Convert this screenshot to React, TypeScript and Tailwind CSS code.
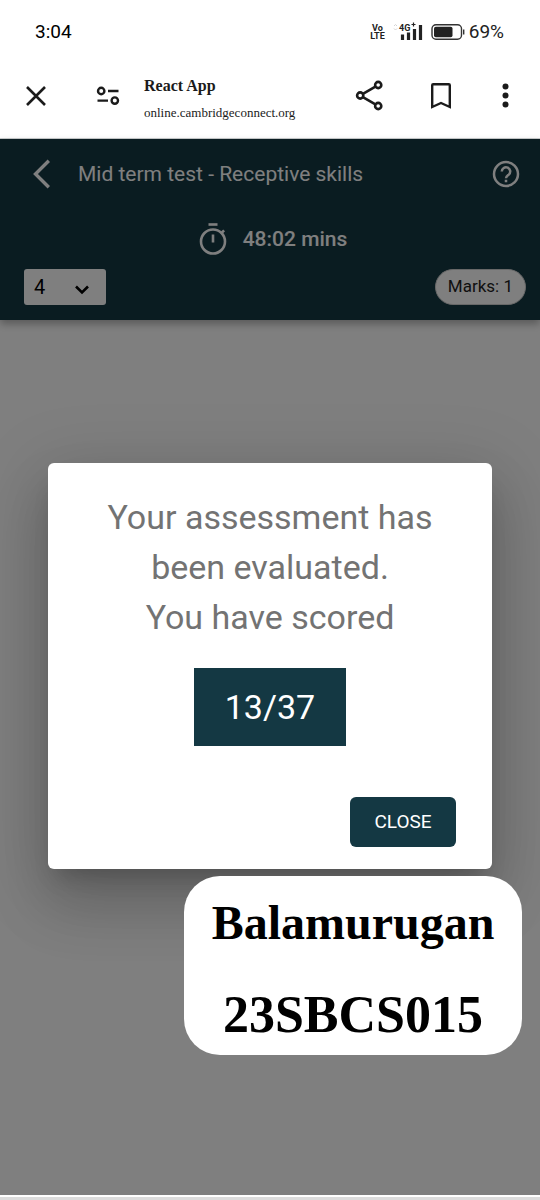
import React from "react";

const SERIF = "font-['Liberation_Serif',serif]";

function StatusBar() {
  return (
    <div className="flex h-16 items-center justify-between pr-9 pl-[35px] text-black">
      <span className="text-[19px] leading-6">3:04</span>
      <div className="flex items-center">
        <div className="mr-2 flex flex-col items-center text-[9px] leading-[8px] font-bold text-[#222] font-['Liberation_Sans_Narrow','Roboto',sans-serif]">
          <span>Vo</span>
          <span>LTE</span>
        </div>
        <svg width="30" height="20" viewBox="0 0 30 20" className="mr-2" role="img" aria-label="Signal">
          <path d="M1 4l1.500-1.500L4 4M1 6.500L2.500 8 4 6.500" stroke="#d4d4d4" strokeWidth="1" fill="none" />
          <text x="6" y="8.500" fontSize="9" fontWeight="700" fontFamily="Roboto, sans-serif" fill="#222">4G</text>
          <path d="M20.500 0.500v4M18.500 2.500h4" stroke="#222" strokeWidth="1.200" />
          <path d="M9.500 12.500v5.500M15.500 10.500v7.500M21.500 7v11M27.500 3v15" stroke="#222" strokeWidth="3.200" />
        </svg>
        <svg width="34" height="18" viewBox="0 0 34 18" className="mr-1" role="img" aria-label="Battery">
          <rect x="1" y="1.700" width="29.500" height="14.600" rx="4" fill="none" stroke="#333" strokeWidth="1.400" />
          <rect x="3" y="3.800" width="18.500" height="10.400" rx="1.800" fill="#222" />
          <path d="M32.700 6.500v5" stroke="#333" strokeWidth="1.400" />
        </svg>
        <span className="text-[19px] leading-6 text-[#222]">69%</span>
      </div>
    </div>
  );
}

function BrowserBar() {
  return (
    <header className="flex h-[75px] items-start border-b border-[#c9cccd] pr-[23px] pl-[26px] text-[#1b1b1b]">
      <button aria-label="Close tab" className="flex h-16 w-5 items-center justify-center">
        <svg width="20" height="20" viewBox="0 0 20 20" fill="none" stroke="currentColor" strokeWidth="2.6">
          <path d="M1 1l18 18M19 1L1 19" />
        </svg>
      </button>
      <button aria-label="Site settings" className="ml-[50px] flex h-16 w-6 items-center justify-center">
        <svg width="24" height="20" viewBox="0 0 24 20" fill="none" stroke="currentColor" strokeWidth="2.4">
          <circle cx="5.2" cy="5" r="3.2" />
          <path d="M12 5h10.500M1.500 14.600H12" />
          <circle cx="18.800" cy="14.600" r="3.2" />
        </svg>
      </button>
      <div className={`ml-6 flex min-w-0 flex-1 flex-col pt-2 ${SERIF}`}>
        <span className="text-base leading-[27px] font-bold">React App</span>
        <span className="truncate text-[13px] leading-[27px]">online.cambridgeconnect.org</span>
      </div>
      <button aria-label="Share" className="flex h-16 w-[30px] items-center justify-center">
        <svg width="30" height="32" viewBox="0 0 30 32" fill="none" stroke="currentColor" strokeWidth="2.6">
          <circle cx="5.200" cy="15.500" r="3.1" />
          <circle cx="23.200" cy="5" r="3.1" />
          <circle cx="23.200" cy="26" r="3.1" />
          <path d="M7.900 13.900L20.400 6.600M7.900 17.100l12.500 7.300" />
        </svg>
      </button>
      <button aria-label="Bookmark" className="ml-11 flex h-16 w-6 items-center justify-center">
        <svg width="24" height="28" viewBox="0 0 24 28" fill="none" stroke="currentColor" strokeWidth="2.4">
          <path d="M3.2 25V3.3q0-1 1-1h15.600q1 0 1 1V25L12 21z" />
        </svg>
      </button>
      <button aria-label="More" className="ml-10 flex h-16 w-6 items-center justify-center">
        <svg width="24" height="26" viewBox="0 0 24 26" fill="currentColor">
          <circle cx="12.500" cy="3.500" r="3" />
          <circle cx="12.500" cy="12.500" r="3" />
          <circle cx="12.500" cy="21.500" r="3" />
        </svg>
      </button>
    </header>
  );
}

function TestHeader() {
  return (
    <div className="bg-[#143843] pr-[14px] pb-[15px] pl-6 text-white shadow-[0_4px_8px_rgba(0,0,0,0.3)]">
      <div className="flex h-[69px] items-center">
        <button aria-label="Back" className="flex w-9 justify-center">
          <svg width="20" height="30" viewBox="0 0 20 30" fill="none" stroke="currentColor" strokeWidth="3.4">
            <path d="M16.800 1.700L3.500 15l13.300 13.300" />
          </svg>
        </button>
        <h1 className="ml-[18px] flex-1 text-[21px] leading-7">Mid term test - Receptive skills</h1>
        <button aria-label="Help" className="mr-[6px]">
          <svg width="28" height="28" viewBox="0 0 28 28" fill="none" stroke="currentColor" strokeWidth="2.5">
            <circle cx="14" cy="14" r="12" />
            <path d="M9.800 11.500a4.200 4.200 0 1 1 7 3.100c-1.600 1.300-2.800 2-2.800 3.700M14 19.800v2.500" />
          </svg>
        </button>
      </div>
      <div className="flex h-[61px] items-center justify-center pr-1">
        <svg width="28" height="34" viewBox="0 0 28 34" fill="none" stroke="currentColor" strokeWidth="2.600" aria-hidden="true">
          <path d="M9.500 2.500h9" />
          <circle cx="14" cy="19.500" r="12" />
          <path d="M14 12.500v8M22.500 11l2.600-2.600" />
        </svg>
        <span className="ml-4 text-[21px] leading-7 font-medium">48:02 mins</span>
      </div>
      <div className="flex items-center justify-between">
        <div className="relative w-[82px]">
          <select
            aria-label="Question"
            defaultValue="4"
            className="h-9 w-full appearance-none rounded-[3px] bg-white pl-[10px] text-[20px] text-black"
          >
            <option>1</option>
            <option>2</option>
            <option>3</option>
            <option>4</option>
          </select>
          <svg
            width="16"
            height="10"
            viewBox="0 0 16 10"
            fill="none"
            stroke="#000"
            strokeWidth="2.600"
            className="pointer-events-none absolute top-4 right-4"
            aria-hidden="true"
          >
            <path d="M2 1.500l6 6 6-6" />
          </svg>
        </div>
        <span className="flex h-9 items-center rounded-full border border-[#d0d0d0] bg-white px-3 text-[17px] text-[#222]">
          Marks: 1
        </span>
      </div>
    </div>
  );
}

function ScoreDialog() {
  return (
    <div className="absolute inset-0 flex items-center bg-black/50 pb-[2px]">
      <div className="relative mx-12 w-full">
        <div
          role="dialog"
          aria-modal="true"
          aria-label="Assessment result"
          className="flex flex-col items-center rounded-md bg-white px-9 pt-[29px] pb-[22px] shadow-[0_16px_22px_-10px_rgba(0,0,0,0.2),0_36px_57px_4px_rgba(0,0,0,0.14),0_14px_69px_12px_rgba(0,0,0,0.12)]"
        >
          <p className="text-center text-[34px] leading-[50px] text-[#737373]">
            Your assessment has
            <br />
            been evaluated.
            <br />
            You have scored
          </p>
          <div className="mt-[26px] flex h-[78px] w-[152px] items-center justify-center bg-[#143843] text-[34px] text-white">
            13/37
          </div>
          <button className="mt-[51px] h-[50px] w-[106px] self-end rounded-md bg-[#143843] text-[19px] text-white">
            CLOSE
          </button>
        </div>
        <div
          className={`absolute top-full -right-[30px] mt-[7px] flex w-[338px] flex-col items-center gap-8 rounded-[36px] bg-white pt-[17px] pb-[10px] font-bold text-black ${SERIF}`}
        >
          <span className="text-[48px] leading-[60px]">Balamurugan</span>
          <span className="text-[52px] leading-[60px]">23SBCS015</span>
        </div>
      </div>
    </div>
  );
}

export default function App() {
  return (
    <div className="flex min-h-screen flex-col bg-white font-['Roboto',sans-serif]">
      <StatusBar />
      <BrowserBar />
      <main className="relative flex-1 bg-white">
        <TestHeader />
        <ScoreDialog />
      </main>
      <div className="h-[5px] border-t-2 border-white bg-[#dcdcdc]" />
    </div>
  );
}
